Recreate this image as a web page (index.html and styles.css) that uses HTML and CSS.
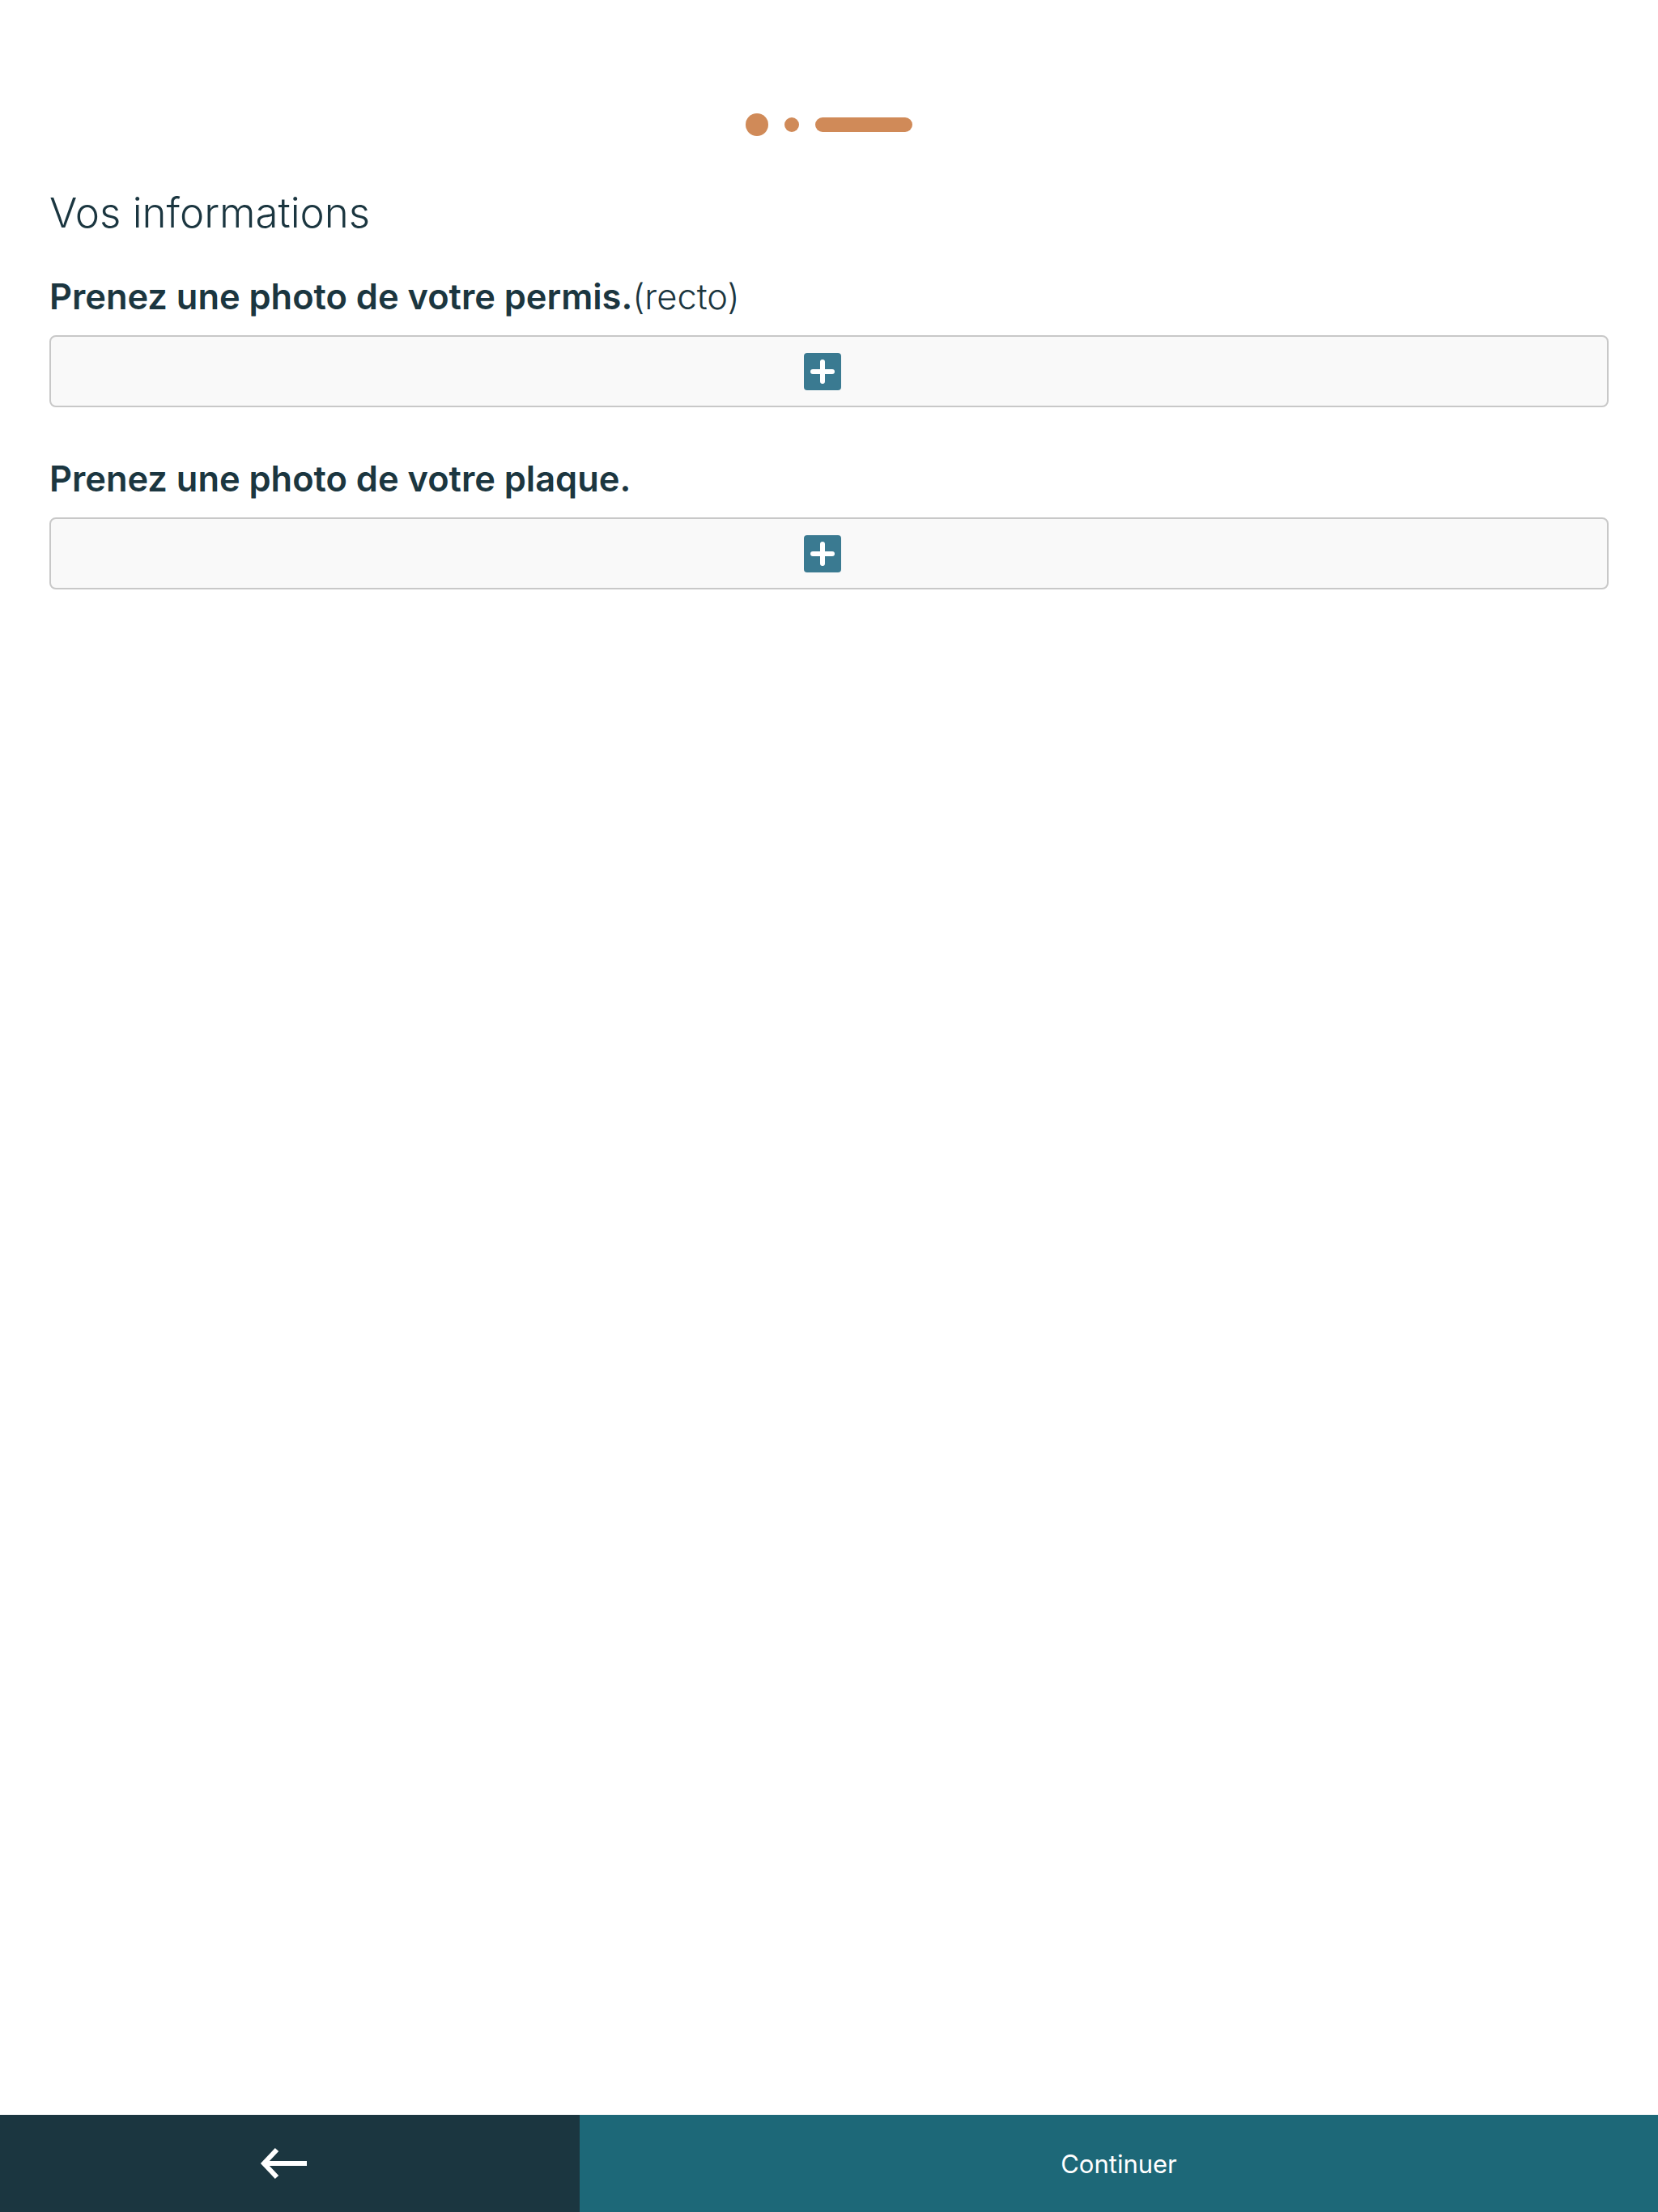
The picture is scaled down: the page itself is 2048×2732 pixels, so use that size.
FILE: index.html
```html
<!DOCTYPE html>
<html lang="fr">
<head>
<meta charset="utf-8">
<title>Vos informations</title>
<link rel="stylesheet" href="styles.css">
</head>
<body>
<div class="page">
  <main class="content">
    <div class="progress">
      <span class="dot dot-big"></span>
      <span class="dot dot-small"></span>
      <span class="bar"></span>
    </div>
    <h1 class="title">Vos informations</h1>
    <section class="field field-first">
      <h2 class="label"><strong>Prenez une photo de votre permis.</strong><span class="hint">(recto)</span></h2>
      <button class="upload" type="button">
        <span class="plus">
          <svg width="46" height="46" viewBox="0 0 46 46"><rect x="0" y="0" width="46" height="46" rx="4" fill="#3a7a91"/><path d="M23 11 V35 M11 23 H35" stroke="#fff" stroke-width="6" stroke-linecap="round"/></svg>
        </span>
      </button>
    </section>
    <section class="field field-second">
      <h2 class="label"><strong>Prenez une photo de votre plaque.</strong></h2>
      <button class="upload" type="button">
        <span class="plus">
          <svg width="46" height="46" viewBox="0 0 46 46"><rect x="0" y="0" width="46" height="46" rx="4" fill="#3a7a91"/><path d="M23 11 V35 M11 23 H35" stroke="#fff" stroke-width="6" stroke-linecap="round"/></svg>
        </span>
      </button>
    </section>
  </main>
  <footer class="actions">
    <button class="back" type="button" aria-label="Retour">
      <svg width="60" height="40" viewBox="0 0 60 40"><path d="M58 20 H6 M21 3 L5 20 L21 37" fill="none" stroke="#fff" stroke-width="6" stroke-linejoin="miter"/></svg>
    </button>
    <button class="next" type="button">Continuer</button>
  </footer>
</div>
</body>
</html>
```

FILE: styles.css
```css
* { box-sizing: border-box; }
html, body { margin: 0; padding: 0; background: #ffffff; }
body { font-family: Inter, "Noto Sans", sans-serif; color: #1b3640; }

.page {
  min-height: 100vh;
  display: flex;
  flex-direction: column;
}

.content {
  flex: 1;
  padding: 140px 61px 0;
}

.progress {
  display: flex;
  justify-content: center;
  align-items: center;
  gap: 20px;
  height: 28px;
}
.dot { display: block; border-radius: 50%; background: #d08a58; }
.dot-big { width: 28px; height: 28px; }
.dot-small { width: 18px; height: 18px; }
.bar { display: block; width: 120px; height: 18px; border-radius: 9px; background: #d08a58; }

.title {
  margin: 64px 0 0 0;
  font-size: 51px;
  line-height: 62px;
  font-weight: 300;
  color: #1b3640;
}

.field-first { margin-top: 46px; }
.field-second { margin-top: 62px; }

.label {
  margin: 0 0 21px 0;
  font-size: 43.4px;
  line-height: 53px;
  font-weight: 400;
  color: #1b3640;
}
.label strong { font-weight: 600; }
.hint { font-weight: 300; }

.upload {
  display: flex;
  align-items: center;
  justify-content: center;
  width: 100%;
  height: 89px;
  padding: 0 16px 0 0;
  background: #f9f9f9;
  border: 2px solid #c8c8c8;
  border-radius: 8px;
  cursor: pointer;
}
.plus { display: block; width: 46px; height: 46px; }
.plus svg { display: block; }

.actions {
  display: flex;
  height: 120px;
}
.back {
  width: 716px;
  border: 0;
  background: #1b3640;
  display: flex;
  align-items: center;
  justify-content: center;
  padding: 0 14px 0 0;
  cursor: pointer;
}
.back svg { display: block; }
.next {
  flex: 1;
  border: 0;
  background: #1d6878;
  color: #ffffff;
  font-family: Inter, "Noto Sans", sans-serif;
  font-size: 31px;
  font-weight: 400;
  cursor: pointer;
}
```
